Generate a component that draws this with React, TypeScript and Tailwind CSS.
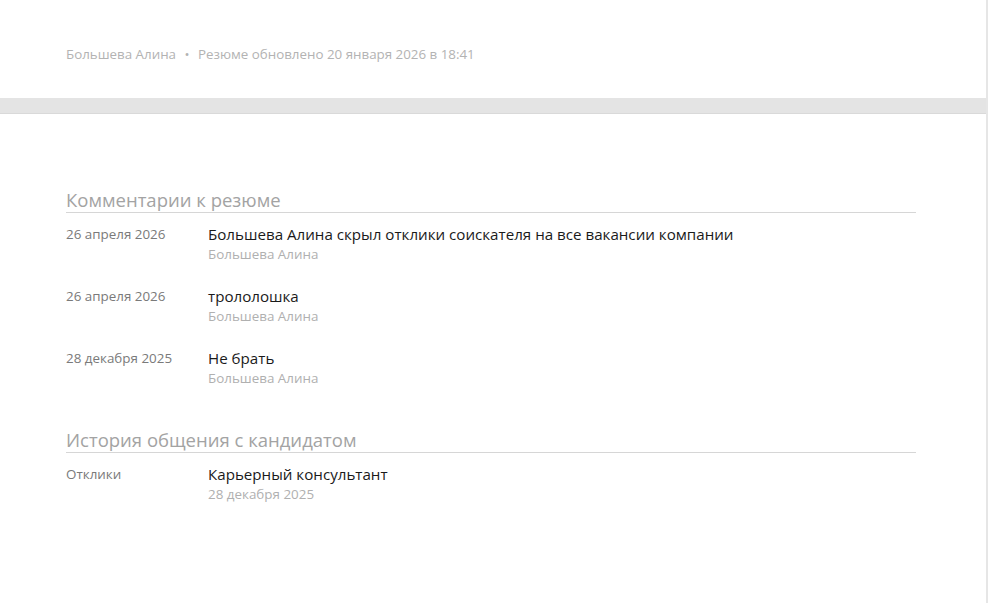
const comments = [
  { date: '26 апреля 2026', text: 'Большева Алина скрыл отклики соискателя на все вакансии компании', author: 'Большева Алина' },
  { date: '26 апреля 2026', text: 'трололошка', author: 'Большева Алина' },
  { date: '28 декабря 2025', text: 'Не брать', author: 'Большева Алина' },
];

function SectionTitle({ children }: { children: string }) {
  return (
    <h2 className="border-b border-[#d6d6d6] text-[18.5px] leading-[22px] text-[#a3a3a3] pb-[1px]">
      {children}
    </h2>
  );
}

function Row({ label, title, sub }: { label: string; title: string; sub: string }) {
  return (
    <div className="flex">
      <div className="w-[142px] shrink-0 pt-[1px] text-[13.4px] leading-[18px] text-[#7a7a7a]">{label}</div>
      <div>
        <div className="text-[15.15px] leading-[21px] text-[#1a1a1a]">{title}</div>
        <div className="text-[13.4px] leading-[18px] text-[#b0b0b0]">{sub}</div>
      </div>
    </div>
  );
}

export default function App() {
  return (
    <div
      className="min-h-[603px] w-[988px] bg-white border-r-2 border-[#e6e6e6]"
      style={{ fontFamily: '"Open Sans", sans-serif' }}
    >
      <div className="h-[98px] px-[66px] pt-[44px]">
        <p className="text-[13.35px] leading-[20px] text-[#b3b3b3]">
          Большева Алина <span className="mx-[5px]">•</span> Резюме обновлено 20 января 2026 в 18:41
        </p>
      </div>
      <div className="h-[16px] bg-[#e4e4e4] border-b border-[#d9d9d9]" />

      <div className="w-[850px] ml-[66px] pt-[75px]">
        <SectionTitle>Комментарии к резюме</SectionTitle>
        <div className="mt-[11px] flex flex-col gap-[23px]">
          {comments.map((c, i) => (
            <Row key={i} label={c.date} title={c.text} sub={c.author} />
          ))}
        </div>

        <div className="mt-[42px]">
          <SectionTitle>История общения с кандидатом</SectionTitle>
          <div className="mt-[11px]">
            <Row label="Отклики" title="Карьерный консультант" sub="28 декабря 2025" />
          </div>
        </div>
      </div>
    </div>
  );
}
